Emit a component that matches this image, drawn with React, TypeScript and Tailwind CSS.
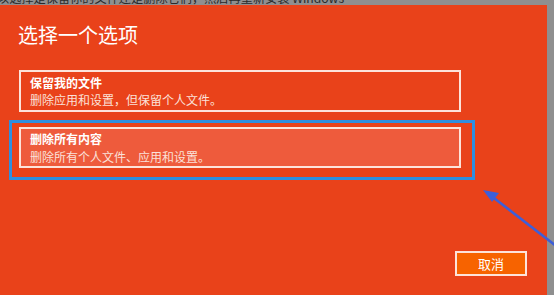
const cjk = "font-['Microsoft_YaHei','Noto_Sans_CJK_SC',sans-serif]";

const Option = ({ title, desc, active = false }: { title: string; desc: string; active?: boolean }) => (
  <div
    className={`ml-[19px] w-[442px] border-2 border-[#fde3da] pl-[9px] ${
      active ? "bg-[#ee5b3c] pt-[2px] pb-[1px]" : "pt-[3px] pb-[2px]"
    }`}
  >
    <div className="text-[12px] leading-[16px] font-bold text-white">{title}</div>
    <div className={`text-[12px] leading-[16px] text-[#fbe1d9] ${active ? "mt-[2px]" : "mt-[1px]"}`}>{desc}</div>
  </div>
);

export default function App() {
  return (
    <div className={`relative h-[295px] w-[554px] overflow-hidden bg-[#8f8f8f] ${cjk}`}>
      <div className="h-[5px] overflow-hidden">
        <div className="-ml-[3px] -mt-[9px] whitespace-nowrap text-[12.2px] leading-[15px] text-[#2a2a2a]">
          以选择是保留你的文件还是删除它们，然后再重新安装 Windows
        </div>
      </div>
      <div className="flex h-[290px] w-[547px] flex-col bg-[#e9421a]">
        <div className="ml-[18px] mt-[16px] text-[20px] leading-[28px] text-white">选择一个选项</div>
        <div className="mt-[21px]">
          <Option title="保留我的文件" desc="删除应用和设置，但保留个人文件。" />
        </div>
        <div className="relative mt-[15px]">
          <Option title="删除所有内容" desc="删除所有个人文件、应用和设置。" active />
          <div className="absolute -top-[7px] left-[9px] h-[60px] w-[466px] border-[3px] border-[#2e8fe0]" />
        </div>
        <div className="flex-1" />
        <button className="mb-[19px] mr-[20px] h-[25px] w-[72px] self-end border-2 border-[#fde3da] bg-[#f76300] text-[13px] leading-none text-white">
          取消
        </button>
      </div>
      <svg className="absolute left-0 top-0" width="554" height="295" viewBox="0 0 554 295">
        <line x1="560" y1="249" x2="490" y2="195" stroke="#3d5fd9" strokeWidth="2.5" />
        <polygon points="483,190 499,193 492,202" fill="#3d5fd9" />
      </svg>
    </div>
  );
}
